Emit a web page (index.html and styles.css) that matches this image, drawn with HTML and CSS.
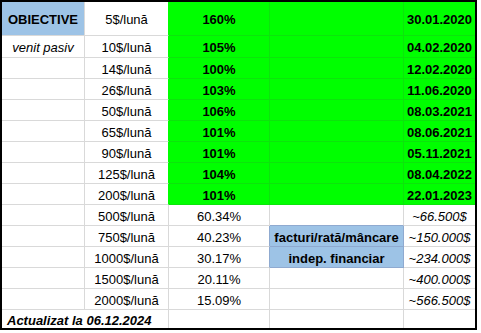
FILE: index.html
```html
<!DOCTYPE html>
<html>
<head>
<meta charset="utf-8">
<link rel="stylesheet" href="styles.css">
</head>
<body>
<div class="sheet">
  <div class="c blue b">OBIECTIVE</div>
  <div class="c gb">5$/lună</div>
  <div class="c g b">160%</div>
  <div class="c g"></div>
  <div class="c g e b">30.01.2020</div>

  <div class="c i">venit pasiv</div>
  <div class="c gb">10$/lună</div>
  <div class="c g b">105%</div>
  <div class="c g"></div>
  <div class="c g e b">04.02.2020</div>

  <div class="c"></div>
  <div class="c gb">14$/lună</div>
  <div class="c g b">100%</div>
  <div class="c g"></div>
  <div class="c g e b">12.02.2020</div>

  <div class="c"></div>
  <div class="c gb">26$/lună</div>
  <div class="c g b">103%</div>
  <div class="c g"></div>
  <div class="c g e b">11.06.2020</div>

  <div class="c"></div>
  <div class="c gb">50$/lună</div>
  <div class="c g b">106%</div>
  <div class="c g"></div>
  <div class="c g e b">08.03.2021</div>

  <div class="c"></div>
  <div class="c gb">65$/lună</div>
  <div class="c g b">101%</div>
  <div class="c g"></div>
  <div class="c g e b">08.06.2021</div>

  <div class="c"></div>
  <div class="c gb">90$/lună</div>
  <div class="c g b">101%</div>
  <div class="c g"></div>
  <div class="c g e b">05.11.2021</div>

  <div class="c"></div>
  <div class="c gb">125$/lună</div>
  <div class="c g b">104%</div>
  <div class="c g"></div>
  <div class="c g e b">08.04.2022</div>

  <div class="c"></div>
  <div class="c gb">200$/lună</div>
  <div class="c g b">101%</div>
  <div class="c g"></div>
  <div class="c g e b">22.01.2023</div>

  <div class="c"></div>
  <div class="c">500$/lună</div>
  <div class="c">60.34%</div>
  <div class="c above-blue"></div>
  <div class="c e i">~66.500$</div>

  <div class="c"></div>
  <div class="c">750$/lună</div>
  <div class="c left-blue">40.23%</div>
  <div class="c lblue b">facturi/rată/mâncare</div>
  <div class="c e i">~150.000$</div>

  <div class="c"></div>
  <div class="c">1000$/lună</div>
  <div class="c left-blue">30.17%</div>
  <div class="c lblue b">indep. financiar</div>
  <div class="c e i">~234.000$</div>

  <div class="c"></div>
  <div class="c">1500$/lună</div>
  <div class="c">20.11%</div>
  <div class="c"></div>
  <div class="c e i">~400.000$</div>

  <div class="c"></div>
  <div class="c">2000$/lună</div>
  <div class="c">15.09%</div>
  <div class="c"></div>
  <div class="c e i">~566.500$</div>

  <div class="c last span2 b i">Actualizat la 06.12.2024</div>
  <div class="c last"></div>
  <div class="c last"></div>
  <div class="c last e"></div>
</div>
</body>
</html>
```

FILE: styles.css
```css
html, body {
  margin: 0;
  padding: 0;
  background: #ffffff;
}

.sheet {
  display: grid;
  grid-template-columns: 83px 84px 101px 134px 71px;
  grid-template-rows: 34px 22px repeat(12, 21px) 18px;
  width: max-content;
  border: 2px solid #000;
  font-family: "Liberation Sans", Arial, sans-serif;
  font-size: 13px;
  color: #000;
}

.c {
  box-sizing: border-box;
  border-right: 1px solid #d9d9d9;
  border-bottom: 1px solid #d9d9d9;
  display: flex;
  align-items: center;
  justify-content: center;
  padding-top: 2px;
  white-space: nowrap;
  line-height: 15px;
}

.e {
  border-right: none;
}

.last {
  border-bottom: none;
}

.b {
  font-weight: bold;
}

.i {
  font-style: italic;
}

.blue {
  background: #9dc3e6;
}

.g {
  background: #00ff00;
  border-right-color: #0ce40c;
  border-bottom-color: #0ce40c;
}

.gb {
  border-right-color: #00ff00;
}

.lblue {
  background: #9dc3e6;
  border-right-color: #8faad0;
  border-bottom-color: #8faad0;
}

.above-blue {
  border-bottom-color: #8faad0;
}

.left-blue {
  border-right-color: #8faad0;
}

.span2 {
  grid-column: span 2;
  justify-content: flex-start;
  padding-left: 5px;
}
```
